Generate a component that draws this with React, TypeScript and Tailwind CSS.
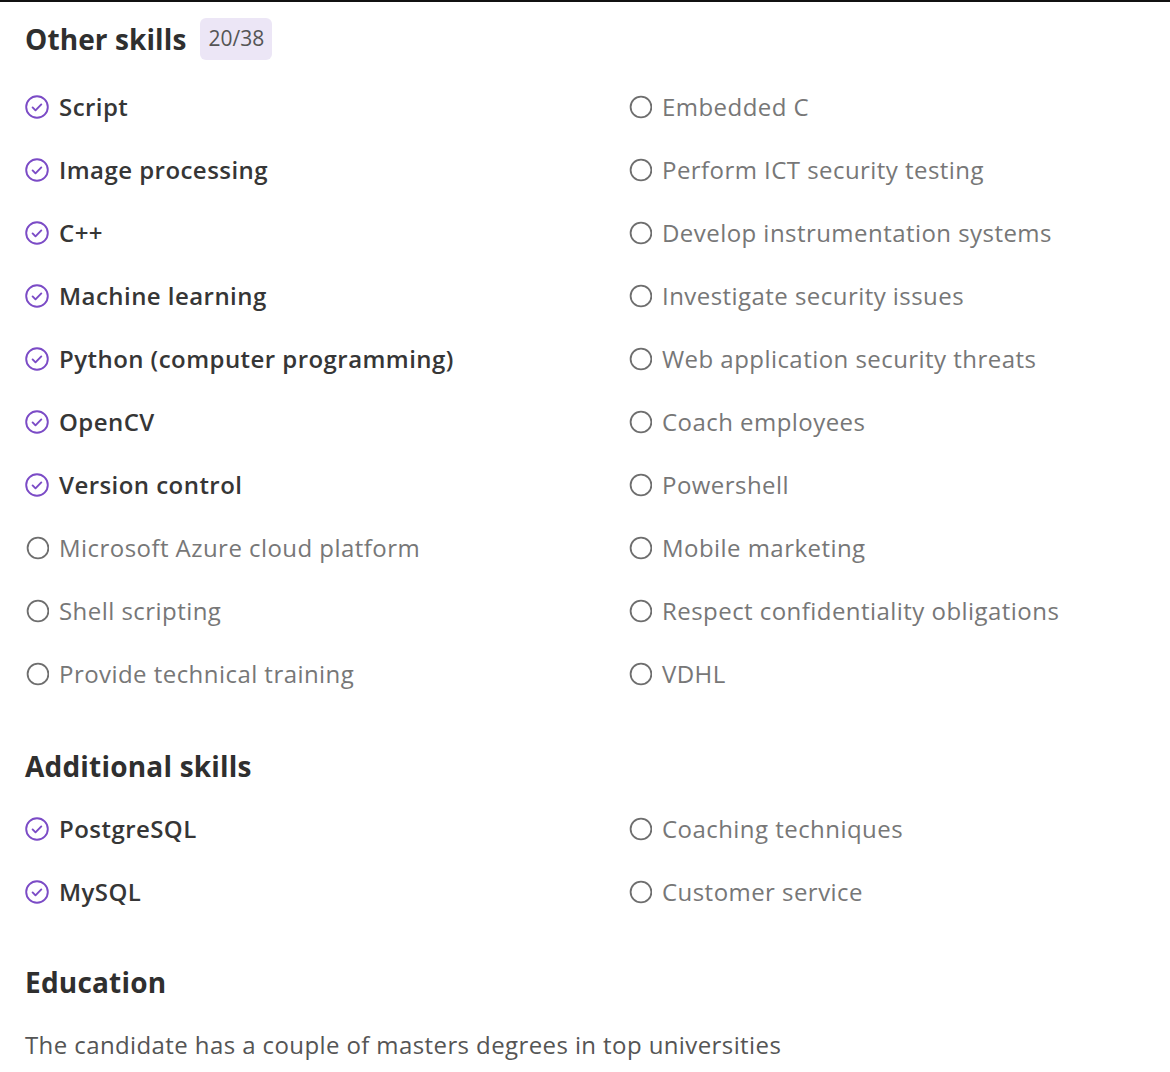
import React from 'react'

type Skill = { name: string; done: boolean }

const otherLeft: Skill[] = [
  { name: 'Script', done: true },
  { name: 'Image processing', done: true },
  { name: 'C++', done: true },
  { name: 'Machine learning', done: true },
  { name: 'Python (computer programming)', done: true },
  { name: 'OpenCV', done: true },
  { name: 'Version control', done: true },
  { name: 'Microsoft Azure cloud platform', done: false },
  { name: 'Shell scripting', done: false },
  { name: 'Provide technical training', done: false },
]

const otherRight: Skill[] = [
  { name: 'Embedded C', done: false },
  { name: 'Perform ICT security testing', done: false },
  { name: 'Develop instrumentation systems', done: false },
  { name: 'Investigate security issues', done: false },
  { name: 'Web application security threats', done: false },
  { name: 'Coach employees', done: false },
  { name: 'Powershell', done: false },
  { name: 'Mobile marketing', done: false },
  { name: 'Respect confidentiality obligations', done: false },
  { name: 'VDHL', done: false },
]

const addLeft: Skill[] = [
  { name: 'PostgreSQL', done: true },
  { name: 'MySQL', done: true },
]

const addRight: Skill[] = [
  { name: 'Coaching techniques', done: false },
  { name: 'Customer service', done: false },
]

function CheckIcon() {
  return (
    <svg width="24" height="24" viewBox="0 0 24 24" fill="none" className="shrink-0">
      <circle cx="12" cy="12" r="10.8" stroke="#7b4bc6" strokeWidth="1.9" />
      <path d="M7.6 12.4l2.9 2.9 5.8-5.9" stroke="#7b4bc6" strokeWidth="1.9" strokeLinecap="round" strokeLinejoin="round" />
    </svg>
  )
}

function EmptyIcon() {
  return (
    <svg width="24" height="24" viewBox="0 0 24 24" fill="none" className="shrink-0">
      <circle cx="13" cy="12" r="10.4" stroke="#6e6e6e" strokeWidth="1.8" />
    </svg>
  )
}

function SkillRow({ skill }: { skill: Skill }) {
  return (
    <div className="flex items-center gap-[10px] h-[63px]">
      {skill.done ? <CheckIcon /> : <EmptyIcon />}
      <span
        className={
          skill.done
            ? 'text-[24px] font-semibold text-[#363636] tracking-[0.45px]'
            : 'text-[24px] font-normal text-[#777777] tracking-[0.45px]'
        }
      >
        {skill.name}
      </span>
    </div>
  )
}

function SkillGrid({ left, right }: { left: Skill[]; right: Skill[] }) {
  return (
    <div className="grid grid-cols-[603px_1fr]">
      <div className="flex flex-col">
        {left.map((s) => (
          <SkillRow key={s.name} skill={s} />
        ))}
      </div>
      <div className="flex flex-col">
        {right.map((s) => (
          <SkillRow key={s.name} skill={s} />
        ))}
      </div>
    </div>
  )
}

export default function App() {
  return (
    <div
      className="w-[1170px] h-[1072px] bg-white border-t-2 border-[#111111] overflow-hidden pl-[25px]"
      style={{ fontFamily: '"Open Sans", "Noto Sans", sans-serif' }}
    >
      <div className="flex items-center gap-[14px] h-[73px]">
        <h2 className="text-[28px] font-bold text-[#2f2f2f] leading-[34px] tracking-[0.1px]">Other skills</h2>
        <span className="bg-[#ece6f6] rounded-[6px] px-[8px] h-[42px] flex items-center text-[21px] text-[#555555]">
          20/38
        </span>
      </div>

      <SkillGrid left={otherLeft} right={otherRight} />

      <h2 className="mt-[44px] mb-[14px] text-[28px] font-bold text-[#2f2f2f] leading-[34px] tracking-[0.2px]">Additional skills</h2>

      <SkillGrid left={addLeft} right={addRight} />

      <h2 className="mt-[42px] text-[28px] font-bold text-[#2f2f2f] leading-[34px] tracking-[0.2px]">Education</h2>
      <p className="mt-[29px] text-[24px] text-[#555555] leading-[34px] tracking-[0.4px]">
        The candidate has a couple of masters degrees in top universities
      </p>
    </div>
  )
}
